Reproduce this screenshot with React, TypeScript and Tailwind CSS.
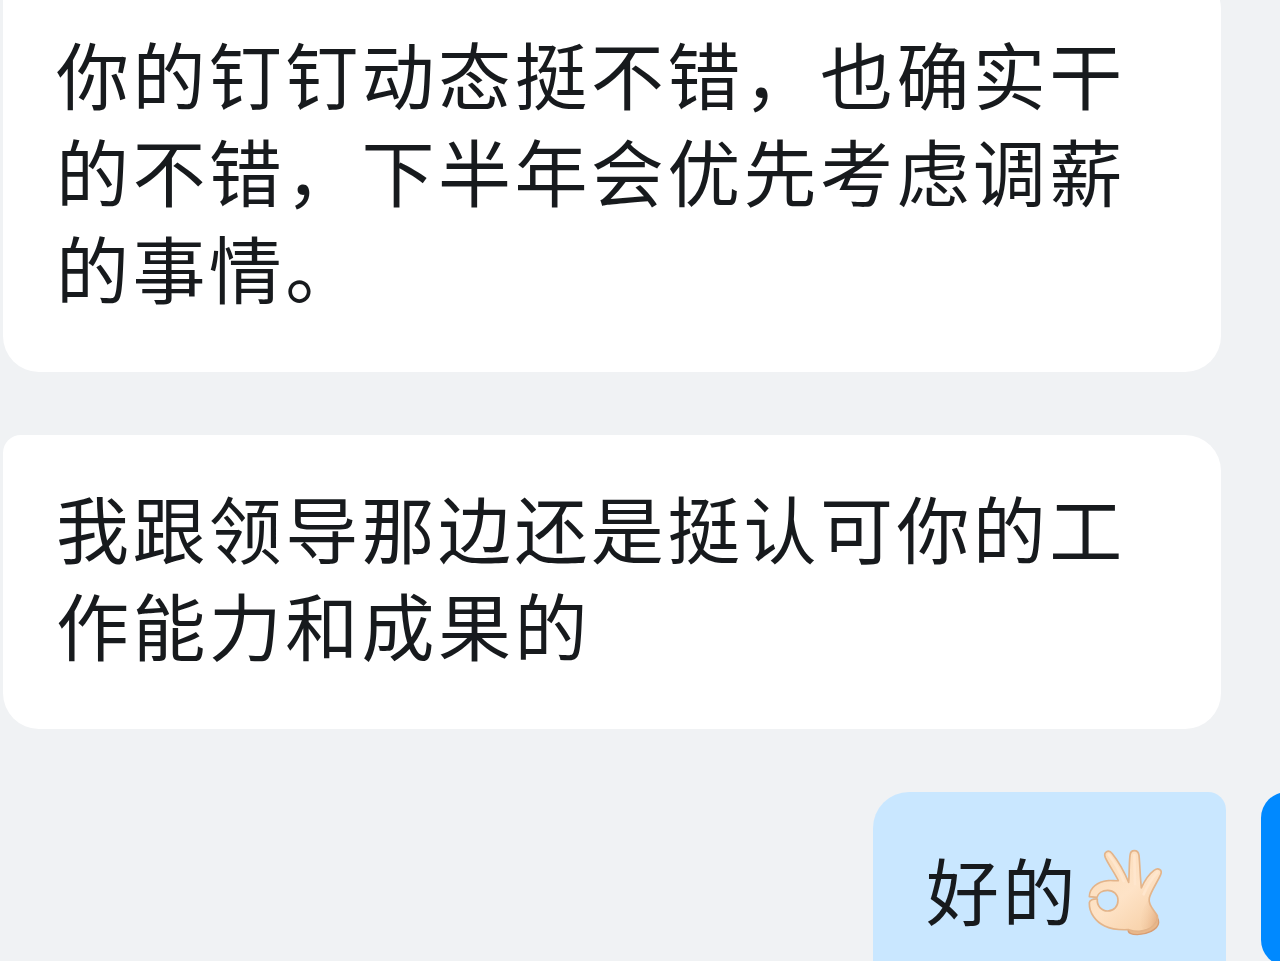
import type { ReactNode } from "react";

function OkHand() {
  return (
    <svg width="77" height="90" viewBox="50 40 231 270" className="shrink-0" role="img" aria-label="OK">
      <defs>
        <linearGradient id="skin" x1="0" y1="0" x2="0.7" y2="1">
          <stop offset="0" stopColor="#fbdcb9" />
          <stop offset="0.6" stopColor="#fee3c7" />
          <stop offset="1" stopColor="#f8d3ac" />
        </linearGradient>
        <linearGradient id="wrist" x1="0" y1="0" x2="1" y2="0.4">
          <stop offset="0" stopColor="#fbdcba" stopOpacity="0" />
          <stop offset="1" stopColor="#dfa578" />
        </linearGradient>
      </defs>
      <path
        d="M174 284 C171 295 184 300 201 300 C228 299 263 286 265 264 C266 246 251 235 239 220 L222 262 Z"
        fill="#e9b88b"
        stroke="#d79d73"
        strokeWidth="4"
      />
      <path
        fillRule="evenodd"
        d="M57 186 C57 158 83 141 112 138 C123 136 132 139 144 138 C134 116 116 93 105 69 C98 51 115 43 126 57 C138 72 158 102 175 143 C177 120 176 88 179 62 C181 43 203 43 206 62 C209 90 209 120 213 160 C220 143 234 120 251 107 C264 98 277 105 271 120 C260 145 242 169 237 190 C232 211 251 225 261 243 C266 266 239 286 207 290 C191 291 184 288 174 285 C150 286 123 284 103 274 C76 262 56 234 57 204 C58 197 68 192 81 193 C79 214 94 229 112 229 C131 229 143 215 143 197 C143 179 130 167 112 167 C95 167 83 176 80 188 Z"
        fill="url(#skin)"
        stroke="#e3b48a"
        strokeWidth="5"
        strokeLinejoin="round"
      />
      <path
        d="M237 192 C230 209 248 224 260 243 C265 262 244 279 218 284 C204 266 211 222 237 192 Z"
        fill="url(#wrist)"
        opacity="0.6"
      />
      <path d="M115 60 C129 78 148 108 160 139 M192 61 L194 148 M261 113 C245 131 229 156 220 179" fill="none" stroke="#ffe6cd" strokeWidth="8" strokeLinecap="round" />
    </svg>
  );
}

function Received({ children }: { children: ReactNode }) {
  return (
    <div className="ml-[3px] w-[1218px] rounded-[36px] rounded-tl-[18px] bg-white pt-[43px] pb-[57px] pl-[53px] first:pt-[51px]">
      {children}
    </div>
  );
}

export default function App() {
  const received = [
    ["你的钉钉动态挺不错，也确实干", "的不错，下半年会优先考虑调薪", "的事情。"],
    ["我跟领导那边还是挺认可你的工", "作能力和成果的"],
  ];

  return (
    <div className="h-[961px] w-[1280px] overflow-hidden bg-[#f0f2f4] font-['Noto_Sans_CJK_SC',sans-serif] text-[73px] leading-[97px] tracking-[3.4px] text-[#171a1d]">
      <div className="-mt-[27px] flex flex-col gap-[63px]">
        {received.map((lines) => (
          <Received key={lines[0]}>
            {lines.map((line) => (
              <p key={line} className="whitespace-nowrap">{line}</p>
            ))}
          </Received>
        ))}

        {/* Sent message with the sender's avatar */}
        <div className="flex items-start">
          <div className="ml-[873px] flex h-[205px] w-[353px] shrink-0 items-start rounded-[36px] rounded-tr-[18px] bg-[#c9e7ff] pt-[48px] pl-[53px]">
            <span className="whitespace-nowrap">好的</span>
            <span className="mt-[8px] ml-[8px]">
              <OkHand />
            </span>
          </div>
          <div className="ml-[35px] h-[174px] w-[174px] shrink-0 rounded-[26px] bg-[#0089ff]" />
        </div>
      </div>
    </div>
  );
}
